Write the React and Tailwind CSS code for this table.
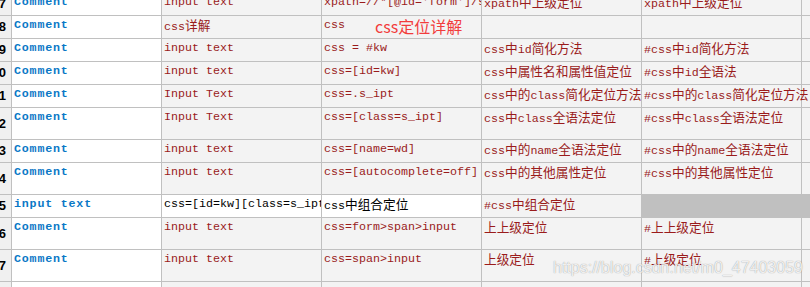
import React from 'react';

const CJK = /([\u3000-\u9fff\uff00-\uffef]+)/;

// splits latin / CJK runs so the CJK glyphs get the wider full-width size
const Txt = ({ s }) =>
  s.split(CJK).map((p, i) =>
    CJK.test(p) ? (
      <span key={i} className="font-['Noto_Sans_CJK_SC',sans-serif] text-[12.7px]">{p}</span>
    ) : (
      p
    )
  );

const tone = {
  k: 'text-[#0a78c6] font-bold tracking-[0.8px]',
  r: 'text-[#9a1b1b]',
  b: 'text-black',
};

const widths = ['w-[150px]', 'w-[160px]', 'w-[160px]', 'w-[160px]', 'w-[160px]'];

const rows = [
  { n: 7, h: 'h-[23px]', cells: [['Comment', 'k'], ['input text', 'r'], ["xpath=//*[@id='form']/span/input", 'r'], ['xpath中上级定位', 'r'], ['xpath中上级定位', 'r']] },
  { n: 8, h: 'h-[23px]', note: true, cells: [['Comment', 'k'], ['css详解', 'r'], ['css', 'r'], ['', 'r'], ['', 'r']] },
  { n: 9, h: 'h-[23px]', cells: [['Comment', 'k'], ['input text', 'r'], ['css = #kw', 'r'], ['css中id简化方法', 'r'], ['#css中id简化方法', 'r']] },
  { n: 10, h: 'h-[23px]', cells: [['Comment', 'k'], ['input text', 'r'], ['css=[id=kw]', 'r'], ['css中属性名和属性值定位', 'r'], ['#css中id全语法', 'r']] },
  { n: 11, h: 'h-[23px]', spill: true, cells: [['Comment', 'k'], ['Input Text', 'r'], ['css=.s_ipt', 'r'], ['css中的class简化定位方法', 'r'], ['#css中的class简化定位方法', 'r']] },
  { n: 12, h: 'h-[32px]', cells: [['Comment', 'k'], ['Input Text', 'r'], ['css=[class=s_ipt]', 'r'], ['css中class全语法定位', 'r'], ['#css中class全语法定位', 'r']] },
  { n: 13, h: 'h-[23px]', cells: [['Comment', 'k'], ['input text', 'r'], ['css=[name=wd]', 'r'], ['css中的name全语法定位', 'r'], ['#css中的name全语法定位', 'r']] },
  { n: 14, h: 'h-[32px]', cells: [['Comment', 'k'], ['input text', 'r'], ['css=[autocomplete=off]', 'r'], ['css中的其他属性定位', 'r'], ['#css中的其他属性定位', 'r']] },
  { n: 15, h: 'h-[23px]', active: true, cells: [['input text', 'k'], ['css=[id=kw][class=s_ipt]', 'b'], ['css中组合定位', 'b'], ['#css中组合定位', 'r'], ['', 'r']] },
  { n: 16, h: 'h-[32px]', cells: [['Comment', 'k'], ['input text', 'r'], ['css=form>span>input', 'r'], ['上上级定位', 'r'], ['#上上级定位', 'r']] },
  { n: 17, h: 'h-[32px]', cells: [['Comment', 'k'], ['input text', 'r'], ['css=span>input', 'r'], ['上级定位', 'r'], ['#上级定位', 'r']] },
  { n: 18, h: 'h-[23px]', cells: [['', 'k'], ['', 'r'], ['', 'r'], ['', 'r'], ['', 'r']] },
];

const cellBg = (row, i) => {
  if (i === 0) return 'bg-white';
  if (row.active && (i === 1 || i === 2)) return 'bg-white';
  if (row.active && i === 4) return 'bg-[#c0c0c0]';
  return 'bg-[#f3f3f3]';
};

export default function App() {
  return (
    <div className="relative w-[810px] h-[287px] overflow-hidden bg-white">
      <div className="-mt-[7px] flex flex-col">
        {rows.map(row => (
          <div key={row.n} className={`flex ${row.h}`}>
            <div className="w-[12px] shrink-0 overflow-hidden flex items-center justify-end pr-[5px] bg-[#f0f0f0] border-r border-b border-[#c0c0c0] font-['Liberation_Sans',sans-serif] font-bold text-[13px] text-black">
              {row.n}
            </div>
            {row.cells.map(([s, t], i) => (
              <div
                key={i}
                className={`${widths[i]} shrink-0 whitespace-nowrap pl-[2px] pt-[2px] leading-[14px] border-r border-b border-[#c0c0c0] font-['Liberation_Mono','Noto_Sans_CJK_SC',monospace] text-[11.67px] ${cellBg(row, i)} ${tone[t]} ${
                  row.spill && i === 4 ? 'relative z-10 overflow-visible' : 'overflow-hidden'
                } ${row.note && i === 2 ? 'relative overflow-visible' : ''}`}
              >
                <Txt s={s} />
                {row.note && i === 2 && (
                  <span className="absolute left-[53px] top-[2px] leading-[16px] text-[16px] text-[#f23c3c] font-['Noto_Sans_CJK_SC',sans-serif] tracking-normal">
                    css定位详解
                  </span>
                )}
              </div>
            ))}
            <div className={`flex-1 border-b border-[#c0c0c0] ${row.active ? 'bg-[#c0c0c0]' : 'bg-[#f3f3f3]'}`} />
          </div>
        ))}
      </div>
      <div className="absolute left-[553px] top-[260px] leading-[16px] text-[16px] font-['Liberation_Sans',sans-serif] text-white/85 [text-shadow:0_0_1px_rgba(0,0,0,0.45)] whitespace-nowrap">
        https://blog.csdn.net/m0_47403059
      </div>
    </div>
  );
}
